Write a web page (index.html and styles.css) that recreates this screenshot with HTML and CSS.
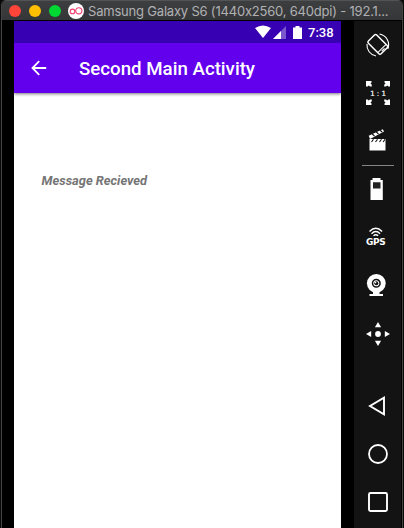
FILE: index.html
```html
<!DOCTYPE html>
<html lang="en">
<head>
<meta charset="utf-8">
<title>Samsung Galaxy S6</title>
<link rel="stylesheet" href="styles.css">
</head>
<body>
<div class="window">
  <header class="titlebar">
    <span class="dot red"></span><span class="dot yellow"></span><span class="dot green"></span>
    <svg class="logo" viewBox="0 0 16 16"><circle cx="8" cy="8" r="8" fill="#fff"/><g fill="none" stroke="#ef3e6d" stroke-width="1.1"><circle cx="4.5" cy="8.4" r="2.3"/><circle cx="10.8" cy="7.8" r="3.1"/></g></svg>
    <span class="caption">Samsung Galaxy S6 (1440x2560, 640dpi) - 192.1...</span>
  </header>
  <div class="content">
    <main class="phone">
      <div class="status">
        <svg width="16" height="14" viewBox="0 0 16 14"><path d="M0 3Q8-2.2 16 3L8 13Z" fill="#fff"/></svg>
        <svg class="signal" width="13" height="13" viewBox="0 0 13 13"><path d="M0 13L13 0V13Z" fill="#7b59cc"/><path d="M0 13L8 5V13Z" fill="#fff"/></svg>
        <svg class="cell" width="9" height="13" viewBox="0 0 9 13"><path d="M0 1.5H2.5V0H6.5V1.5H9V13H0Z" fill="#fff"/></svg>
        <span class="time">7:38</span>
      </div>
      <div class="appbar">
        <svg width="16" height="16" viewBox="0 0 16 16"><path d="M15.2 8H1.6M8.2 1.2L1.5 8L8.2 14.8" fill="none" stroke="#fff" stroke-width="1.8"/></svg>
        <h1>Second Main Activity</h1>
      </div>
      <p class="message">Message Recieved</p>
    </main>
    <aside class="tools">
      <svg viewBox="-24 -24 48 48"><g fill="none" stroke="#fff"><g transform="translate(-.2 -.6) rotate(-45)"><rect x="-5.9" y="-9" width="11.8" height="18" rx="1.6" stroke-width="1.5"/><path d="M-5.5 5.8H5.5M-2 7.5H2" stroke-width="1"/></g><path d="M1.5-11A11 11 0 0 1 9.8 4M-11-1A11 11 0 0 0-2 11" stroke-width="1.1"/></g></svg>
      <svg viewBox="-24 -24 48 48"><g fill="#fff"><path id="corner" d="M-12-12H-6.5V-10.5L-7.5-9.5L-6.2-8.2V-6.5H-8L-9.2-7.6L-10.4-6.5H-12Z"/><use href="#corner" transform="scale(-1 1)"/><use href="#corner" transform="scale(1 -1)"/><use href="#corner" transform="scale(-1 -1)"/><text class="ratio" x="0" y="2.7" text-anchor="middle">1 : 1</text></g></svg>
      <svg viewBox="-24 -24 48 48"><path d="M-8.5-2H7.5V9.5H-8.5Z" fill="#fff"/><path d="M-6.5 1L-4.5-1.8M-2.5 1L-.5-1.8M1.5 1L3.5-1.8M5.2 1L7-1.8" stroke="#131313" stroke-width="1.1"/><path d="M-9.3-5.2L4.8-11.8L6-9.4L-8-2Z" fill="#fff"/><path d="M-5.7-7L-3.5-5M-1.7-9L.5-7M2-10.7L4.2-9" stroke="#131313" stroke-width="1.1"/></svg>
      <hr>
      <svg viewBox="-24 -24 48 48"><path d="M-7.5-9H-5.5V-11H2.5V-9H4.8V11H-7.5Z" fill="#fff"/><path d="M-5-6.7H2.5V-.5H-5Z" fill="#222"/></svg>
      <svg viewBox="-24 -24 48 48"><g fill="none" stroke="#fff" stroke-width="1.4"><path d="M-8.5-5.5Q-2.2-11.8 4.1-5.5M-6.5-3.3Q-2.2-7.5 2.1-3.3M-4.5-1.2Q-2.2-3.4.1-1.2"/></g><text class="gps" x="-2.3" y="7.7" text-anchor="middle">GPS</text></svg>
      <svg viewBox="-24 -24 48 48"><circle cx="-1.7" cy="-1.7" r="9.4" fill="#fff"/><circle cx="-1.7" cy="-1.7" r="3.8" fill="#fff" stroke="#131313" stroke-width="1.5"/><circle cx="-1.7" cy="-1.7" r="2" fill="#131313"/><circle cx="-2.4" cy="-2.4" r=".8" fill="#fff"/><path d="M-5 7H1.5V9H5V11H-8.5V9H-5Z" fill="#fff"/></svg>
      <svg viewBox="-24 -24 48 48"><g transform="translate(0 1)" fill="#fff"><circle r="2.9"/><path id="tip" d="M0-12L3.1-6.8H-3.1Z"/><use href="#tip" transform="rotate(90)"/><use href="#tip" transform="rotate(180)"/><use href="#tip" transform="rotate(270)"/></g></svg>
      <svg class="back" viewBox="-24 -24 48 48"><path d="M6-8.3V8.3L-8 0Z" fill="none" stroke="#fff" stroke-width="1.9"/></svg>
      <svg viewBox="-24 -24 48 48"><circle r="9" fill="none" stroke="#fff" stroke-width="1.8"/></svg>
      <svg viewBox="-24 -24 48 48"><rect x="-9" y="-9" width="18" height="18" rx="1.5" fill="none" stroke="#fff" stroke-width="1.9"/></svg>
    </aside>
  </div>
</div>
</body>
</html>
```
FILE: styles.css
```css
* { box-sizing: border-box; }
body { margin: 0; background: #090909; overflow: hidden; font-family: Roboto, sans-serif; }
.window { width: 402px; height: 528px; margin-left: 1px; border: solid #444; border-width: 0 1px; border-radius: 5px 5px 0 0; background: #000; overflow: hidden; }
.titlebar { display: flex; align-items: center; height: 20px; padding-left: 7px; background: linear-gradient(#3d3e40, #353638); border-top: 1px solid #525355; }
.dot { width: 12px; height: 12px; margin-right: 8px; border-radius: 50%; }
.red { background: #ff453a; }
.yellow { background: #ffbf00; }
.green { background: #00d732; }
.logo { width: 16px; height: 16px; margin: 0 4px 0 -1px; }
.caption { font: 13px/18px Inter, sans-serif; font-feature-settings: "calt" 0; letter-spacing: -.2px; color: #b0b1b3; white-space: nowrap; }
.content { display: flex; height: 508px; padding: 1px 0 0 12px; }
.phone { width: 327px; background: #fff; }
.status { display: flex; align-items: center; height: 22px; padding: 0 8px 0 0; justify-content: flex-end; background: #3700b3; }
.signal { margin-left: 2px; }
.cell { margin: 0 6px 0 7px; }
.time { width: 25px; font-size: 13px; font-weight: 500; color: #fff; }
.appbar { display: flex; align-items: center; height: 50px; padding-left: 17px; background: #6200ee; box-shadow: 0 1px 3px #0008; clip-path: inset(0 0 -6px); }
.appbar h1 { margin: 1px 0 0 32px; font-size: 18.7px; font-weight: 500; line-height: 24px; color: #fff; white-space: nowrap; }
.message { margin: 79px 0 0 27.5px; font-size: 12.9px; line-height: 17px; font-weight: 700; font-style: italic; color: #757575; }
.tools { display: flex; flex-direction: column; width: 47px; margin-left: 13px; background: #131313; }
.tools svg { flex: none; width: 48px; height: 48px; }
.tools hr { width: 32px; height: 1px; margin: 0 0 -1px 8px; border: 0; background: #858585; }
.tools .back { margin-top: 25px; }
.ratio { font: 7px "DejaVu Sans", sans-serif; stroke: #fff; stroke-width: .2px; }
.gps { font: 700 9px "DejaVu Sans", sans-serif; letter-spacing: -.3px; fill: #fff; }
```
